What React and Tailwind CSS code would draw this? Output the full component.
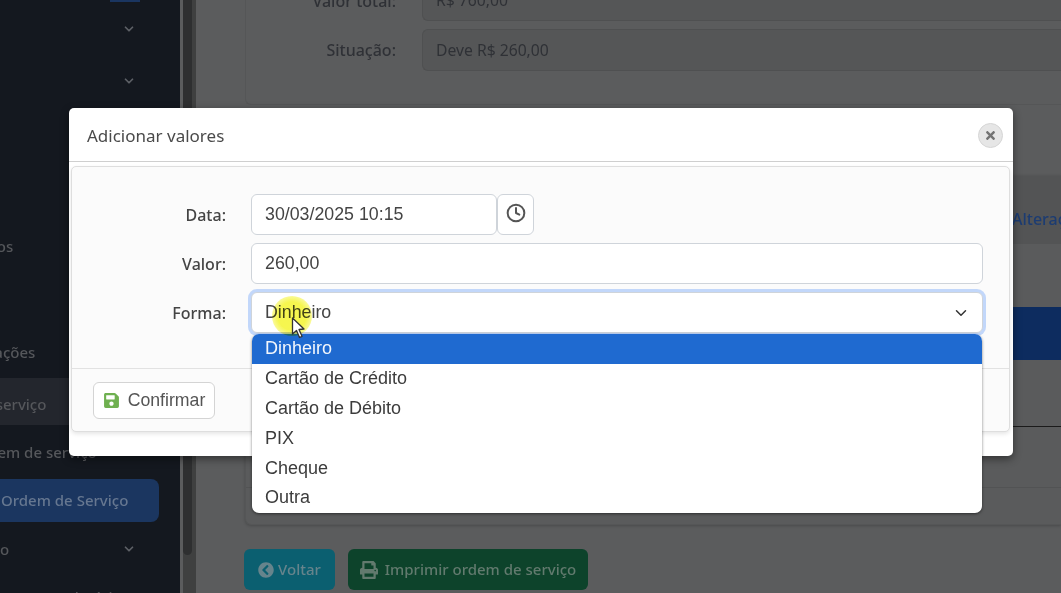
import React from "react";
import { FaSave, FaPrint, FaChevronCircleLeft, FaTimes } from "react-icons/fa";
import { ChevronDown, Clock } from "lucide-react";

const sans = "font-['Noto_Sans','Open_Sans',sans-serif]";
const arial = "font-['Liberation_Sans',Arial,sans-serif]";

function NavChevron() {
  return <ChevronDown size={14} strokeWidth={3} className="text-[#5d6066]" />;
}

function Sidebar() {
  return (
    <aside className={`w-[180px] h-full shrink-0 bg-[#14181f] flex flex-col overflow-hidden text-[15px] font-medium text-[#55575b] ${sans}`}>
      <div className="h-[2px] shrink-0 w-[30px] ml-[110px] bg-[#1a3560]" />
      <div className="h-[54px] shrink-0 flex justify-end pr-[44px] items-center"><NavChevron /></div>
      <div className="h-[50px] shrink-0 flex justify-end pr-[44px] items-center"><NavChevron /></div>
      <div className="h-[129px] shrink-0" />
      <div className="h-[22px] shrink-0 leading-[22px] -ml-[52px] whitespace-nowrap">Produtos</div>
      <div className="h-[84px] shrink-0" />
      <div className="h-[22px] shrink-0 leading-[22px] -ml-[53px] whitespace-nowrap">Notificações</div>
      <div className="h-[15px] shrink-0" />
      <div className="h-[47px] shrink-0 bg-[#23262d] flex items-center pt-[6px] -ml-[80px] whitespace-nowrap">Ordem de serviço</div>
      <div className="h-[54px] shrink-0 flex items-center -ml-[68px] whitespace-nowrap">Nova ordem de serviço</div>
      <div className="h-[43px] shrink-0 mr-[21px] bg-[#1b3660] rounded-r-[8px] flex items-center pl-[1px] text-[#667790] whitespace-nowrap">Ordem de Serviço</div>
      <div className="h-[54px] shrink-0 flex items-center justify-between pr-[44px]">
        <span>o</span><NavChevron />
      </div>
      <div className="pt-[10px] pl-[60px] whitespace-nowrap">relatórios</div>
    </aside>
  );
}

function Background() {
  return (
    <main className={`flex-1 h-full bg-[#5b5c5d] overflow-hidden pl-[49px] ${sans} text-[#2f3136]`}>
      <section className="h-[105px] border border-t-0 border-r-0 border-[#555657] rounded-bl-[6px] flex flex-col gap-[8px]">
        <div className="flex items-center h-[21px] overflow-hidden">
          <span className="w-[150px] text-right text-[16px] font-medium -mt-[20px]">Valor total:</span>
          <span className="ml-[26px] flex-1 h-[21px] bg-[#555657] border border-t-0 border-r-0 border-[#4f5051] rounded-bl-[6px] text-[15.7px] pl-[13px] leading-[0px]">R$ 760,00</span>
        </div>
        <div className="flex items-center h-[42px]">
          <span className="w-[150px] text-right text-[16px] font-medium">Situação:</span>
          <span className="ml-[26px] flex-1 h-[42px] bg-[#555657] border border-r-0 border-[#4f5051] rounded-l-[6px] text-[15.7px] pl-[13px] leading-[40px]">Deve R$ 260,00</span>
        </div>
      </section>
      <section className="mt-[70px] h-[350px] border border-r-0 border-[#555657] rounded-bl-[6px] flex flex-col bg-[#5a5b5c] shadow-[0_1px_3px_rgba(0,0,0,0.2)]">
        <div className="h-[68px] shrink-0 bg-[#535455] flex items-center pt-[18px] overflow-hidden">
          <span className="ml-[766px] text-[#1c3c72] text-[16px] font-medium whitespace-nowrap">Alterações</span>
        </div>
        <div className="h-[63px] shrink-0" />
        <div className="h-[53px] shrink-0 bg-[#0d2c5f]" />
        <div className="h-[67px] shrink-0 border-b border-[#1b1b1b]" />
        <div className="h-[61px] shrink-0 border-b border-[#525354]" />
      </section>
      <div className="mt-[24px] -ml-[1px] flex gap-[13px]">
        <div className="w-[91px] h-[41px] rounded-[6px] bg-[#0b5f70] flex items-center justify-center gap-[4px] text-[#66848c] text-[15px] font-medium">
          <FaChevronCircleLeft size={16} />Voltar
        </div>
        <div className="w-[240px] h-[41px] rounded-[6px] bg-[#0d432b] flex items-center justify-center gap-[7px] text-[#627a6e] text-[15px] font-medium whitespace-nowrap">
          <FaPrint size={18} />Imprimir ordem de serviço
        </div>
      </div>
    </main>
  );
}

function Field({ label, children }) {
  return (
    <div className="flex items-center h-[41px] gap-[25px]">
      <label className={`w-[130px] text-right text-[16px] font-medium text-[#444] ${sans}`}>{label}</label>
      {children}
    </div>
  );
}

const inputCls = `h-[41px] bg-white border border-[#cfd4da] rounded-[6px] flex items-center pl-[13px] text-[17.8px] text-[#444] ${arial}`;

function Modal() {
  const options = ["Dinheiro", "Cartão de Crédito", "Cartão de Débito", "PIX", "Cheque", "Outra"];
  return (
    <div className="absolute left-[69px] top-[108px] w-[944px] h-[348px] bg-white rounded-[5px] shadow-[0_3px_8px_rgba(0,0,0,0.45)] flex flex-col">
      <header className={`h-[54px] shrink-0 border-b border-[#cfcfcf] flex items-center justify-between pt-[2px] pl-[18px] pr-[10px] ${sans}`}>
        <span className="text-[17px] text-[#4a4a4a]">Adicionar valores</span>
        <span className="w-[25px] h-[25px] rounded-full bg-[#e6e6e6] border border-[#d6d6d6] flex items-center justify-center text-[#737373]">
          <FaTimes size={13} />
        </span>
      </header>
      <div className="mt-[4px] ml-[2px] mr-[3px] h-[266px] border border-[#dedede] rounded-[5px] bg-[#fbfbfb] shadow-[0_2px_4px_rgba(0,0,0,0.1)] flex flex-col">
        <div className="h-[202px] shrink-0 border-b border-[#e2e2e2] pt-[27px] pl-[24px] pr-[26px] flex flex-col gap-[8px]">
          <Field label="Data:">
            <div className={`${inputCls} w-[246px]`}>30/03/2025 10:15</div>
            <div className="-ml-[25px] w-[37px] h-[41px] border border-[#cfd4da] rounded-[6px] bg-white flex items-center justify-center pb-[4px] text-[#555]">
              <Clock size={20} strokeWidth={2.4} />
            </div>
          </Field>
          <Field label="Valor:">
            <div className={`${inputCls} flex-1 border-[#c6d5ea]`}>260,00</div>
          </Field>
          <Field label="Forma:">
            <div className={`${inputCls} flex-1 justify-between pr-[12px] border-[#9dbcf0] shadow-[0_0_0_3px_rgba(170,200,250,0.7)]`}>
              <span>Dinheiro</span>
              <ChevronDown size={18} strokeWidth={2} className="text-[#333]" />
            </div>
          </Field>
        </div>
        <div className="pt-[13px] pl-[21px]">
          <div className={`w-[122px] h-[37px] bg-white border border-[#d4d4d4] rounded-[6px] flex items-center justify-center gap-[8px] text-[17.7px] text-[#555] ${arial}`}>
            <FaSave size={17} className="text-[#6fb050]" />Confirmar
          </div>
        </div>
      </div>
      <ul className={`absolute left-[183px] top-[226px] w-[730px] h-[179px] bg-white rounded-[7px] overflow-hidden shadow-[0_1px_3px_rgba(0,0,0,0.5)] text-[18px] text-[#3c3c3c] ${arial}`}>
        {options.map((o, i) => (
          <li key={o} className={`h-[29.8px] flex items-center pl-[13px] ${i === 0 ? "bg-[#1f6ad0] text-[#f2f6fc]" : ""}`}>{o}</li>
        ))}
      </ul>
      <div className="absolute left-[203px] top-[188px] w-[40px] h-[40px] rounded-full mix-blend-multiply bg-[radial-gradient(circle,rgba(245,245,60,0.9)_50%,rgba(245,245,60,0)_100%)] pointer-events-none" />
      <svg className="absolute left-[222px] top-[209px]" width="16" height="24" viewBox="0 0 16 24">
        <path d="M1.5 1 L1.5 17 L5.5 13.5 L8.5 20.5 L11 19.3 L8 12.5 L13 12 Z" fill="#fff" stroke="#333" strokeWidth="1.3" strokeLinejoin="round" />
      </svg>
    </div>
  );
}

export default function App() {
  return (
    <div className="relative w-[1061px] h-[593px] overflow-hidden flex bg-[#5b5c5d]">
      <Sidebar />
      <div className="w-[16px] h-full shrink-0 bg-[#3f4040] pr-[4px] border-l-[3px] border-[#5b5c5d]">
        <div className="h-[555px] w-[9px] rounded-b-[5px] bg-[#2e2f30]" />
      </div>
      <Background />
      <Modal />
    </div>
  );
}
